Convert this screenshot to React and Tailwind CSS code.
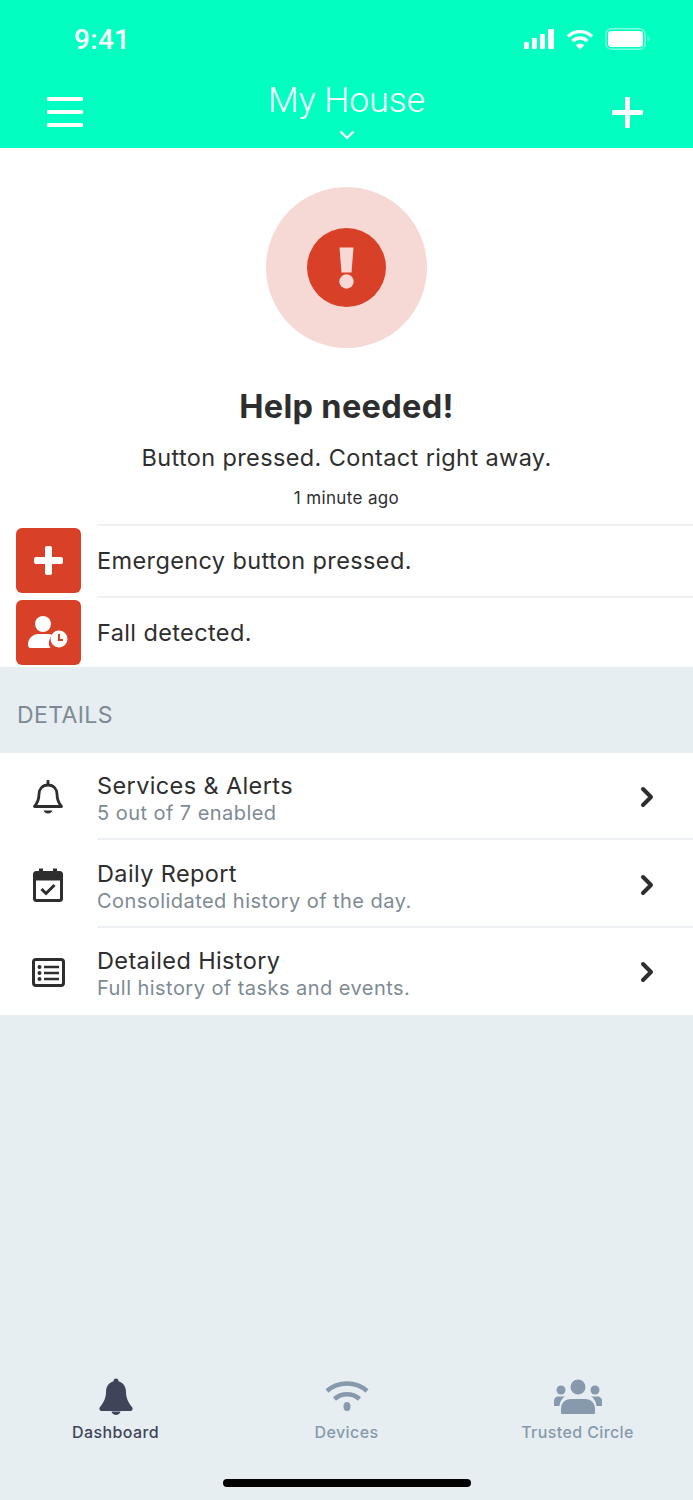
import React from "react";
import { ChevronRight } from "lucide-react";

const RED = "#d84127";

const StatusIcons = () => (
  <div className="flex items-center gap-[11px]">
    <svg width="32" height="20" viewBox="0 0 32 20" fill="white">
      <rect x="1" y="13" width="5" height="7" rx="1.2" />
      <rect x="9" y="9" width="5" height="11" rx="1.2" />
      <rect x="17" y="5" width="5" height="15" rx="1.2" />
      <rect x="25" y="0" width="6" height="20" rx="1.2" />
    </svg>
    <svg width="28" height="21" viewBox="0 0 28 21" fill="none" stroke="white" strokeWidth="3.4">
      <path d="M2 7.5C9 1 19 1 26 7.5" />
      <path d="M6.5 12C11 8 17 8 21.5 12" />
      <path d="M14 20.5L9.8 16.2C12 14.4 16 14.4 18.2 16.2Z" fill="white" stroke="none" />
    </svg>
    <svg width="45" height="22" viewBox="0 0 45 22" fill="none">
      <rect x="0.8" y="0.8" width="39.4" height="20.4" rx="5.5" stroke="white" strokeOpacity="0.5" strokeWidth="1.4" />
      <rect x="3" y="3" width="35" height="16" rx="3.4" fill="white" />
      <path d="M42.500 8v6c1.200-.5 2-1.700 2-3s-.8-2.500-2-3z" fill="white" fillOpacity="0.45" />
    </svg>
  </div>
);

const AlertRow = ({ icon, label }) => (
  <div className="flex h-[71.5px] items-center">
    <div className="ml-4 mt-[2px] flex h-[65px] w-[65px] shrink-0 items-center justify-center rounded-[6px] bg-[#d84127]">
      {icon}
    </div>
    <div className="ml-4 flex h-full flex-1 items-center border-t-2 border-[#edf1f4] text-[23.5px] tracking-[0.38px] text-[#2e2e2e]">
      {label}
    </div>
  </div>
);

const DetailRow = ({ icon, title, sub, last }) => (
  <div className="flex h-[87.5px] items-center">
    <div className="flex w-[97px] shrink-0 justify-center pr-px pt-[2px]">{icon}</div>
    <div className={`flex h-full flex-1 items-center border-b-2 pr-[30px] ${last ? "border-transparent" : "border-[#edf1f4]"}`}>
      <div className="flex-1 pt-[8px]">
        <p className="text-[23.5px] leading-[28px] tracking-[0.38px] text-[#2e2e2e]">{title}</p>
        <p className="text-[20px] leading-[26px] tracking-[0.45px] text-[#7e8a93]">{sub}</p>
      </div>
      <ChevronRight size={32} strokeWidth={3} color="#2e2e2e" className="mt-[4px]" />
    </div>
  </div>
);

const Tab = ({ icon, label, active }) => (
  <div className="flex w-[231px] flex-col items-center">
    <div className="flex h-[40px] items-center justify-center">{icon}</div>
    <span className={`mt-[4px] text-[16px] font-medium tracking-[0.4px] ${active ? "text-[#3f4458]" : "text-[#8799ad]"}`}>
      {label}
    </span>
  </div>
);

export default function App() {
  return (
    <div className="flex min-h-[1500px] flex-col bg-[#e6eef1] font-['Inter',sans-serif]">
      {/* header */}
      <div className="h-[148px] bg-[#00ffc0] text-white">
        <div className="flex h-[78px] items-center justify-between pl-[74px] pr-[43px]">
          <span className="pt-[1px] text-[28px] font-medium tracking-[0.3px] font-['Roboto',sans-serif]">9:41</span>
          <StatusIcons />
        </div>
        <div className="relative flex h-[70px] items-start justify-between pl-[47px] pr-[50px]">
          <div className="mt-[19px] flex w-[36px] flex-col gap-[9px]">
            <div className="h-[4px] rounded-[1px] bg-white" />
            <div className="h-[4px] rounded-[1px] bg-white" />
            <div className="h-[4px] rounded-[1px] bg-white" />
          </div>
          <div className="absolute left-0 right-0 top-0 flex flex-col items-center">
            <span className="text-[35.5px] leading-[45px] font-light font-['Roboto',sans-serif]">My House</span>
            <svg className="mt-[7px]" width="16" height="10" viewBox="0 0 16 10" fill="none" stroke="white" strokeWidth="2.2">
              <path d="M1.500 1.500L8 8l6.500-6.500" />
            </svg>
          </div>
          <svg className="mt-[19px]" width="31" height="31" viewBox="0 0 31 31" fill="white">
            <rect x="13" y="0" width="5" height="31" rx="1" />
            <rect x="0" y="13" width="31" height="5" rx="1" />
          </svg>
        </div>
      </div>

      {/* alert */}
      <div className="bg-white">
        <div className="flex flex-col items-center pt-[39px]">
          <div className="flex h-[161px] w-[161px] items-center justify-center rounded-full bg-[#f6d9d4]">
            <div className="flex h-[79px] w-[79px] items-center justify-center rounded-full bg-[#d84127]">
              <svg width="15" height="42" viewBox="0 0 15 42" fill="#f6d9d4">
                <path d="M.5 .5h14l-2 25H2.500z" />
                <circle cx="7.500" cy="34.500" r="7.200" />
              </svg>
            </div>
          </div>
          <h1 className="mt-[38px] text-[32.5px] leading-[42px] font-bold tracking-[0.3px] text-[#2e2e2e]">Help needed!</h1>
          <p className="mt-[13px] text-[23.5px] leading-[34px] tracking-[0.38px] text-[#2e2e2e]">Button pressed. Contact right away.</p>
          <p className="mt-[11px] text-[17px] leading-[24px] tracking-[0.35px] text-[#2e2e2e]">1 minute ago</p>
        </div>
        <div className="mt-[14px]">
          <AlertRow
            label="Emergency button pressed."
            icon={
              <svg width="29" height="29" viewBox="0 0 29 29" fill="white">
                <rect x="11" y="0" width="7" height="29" rx="2" />
                <rect x="0" y="11" width="29" height="7" rx="2" />
              </svg>
            }
          />
          <AlertRow
            label="Fall detected."
            icon={
              <svg width="42" height="33" viewBox="0 0 42 33" fill="white">
                <circle cx="15" cy="8" r="8" />
                <path d="M3 32c-2 0-3-1-3-3 0-7 5-11 10-11h10c1.500 0 3 .3 4.500.9-3.500 3-5 9-2 13.100z" />
                <circle cx="31" cy="23" r="8.500" />
                <path d="M31 18V24h4" fill="none" stroke={RED} strokeWidth="2" />
              </svg>
            }
          />
        </div>
      </div>

      {/* details */}
      <div className="flex h-[85.5px] items-center px-[17px] pt-[10px] text-[23px] tracking-[0.4px] text-[#7e8a93]">DETAILS</div>
      <div className="bg-white">
        <DetailRow
          title="Services & Alerts"
          sub="5 out of 7 enabled"
          icon={
            <svg width="30" height="34" viewBox="0 0 30 34" fill="none" stroke="#2e2e2e" strokeWidth="2.800">
              <path d="M15 5c-5.500 0-9 4-9 9 0 6-1.500 9-4.500 12.500h27C25.500 23 24 20 24 14c0-5-3.500-9-9-9z" strokeLinejoin="round" />
              <path d="M15 1v3" strokeLinecap="round" />
              <path d="M10.500 30.500h9c-.8 2-2.500 3-4.500 3s-3.700-1-4.500-3z" fill="#2e2e2e" stroke="none" />
            </svg>
          }
        />
        <DetailRow
          title="Daily Report"
          sub="Consolidated history of the day."
          icon={
            <svg width="30" height="34" viewBox="0 0 30 34" fill="none" stroke="#2e2e2e" strokeWidth="3">
              <rect x="1.500" y="4.500" width="27" height="28" rx="2" />
              <path d="M1.500 7h27v4h-27z" fill="#2e2e2e" />
              <path d="M8 0.500v6M22 0.500v6" strokeWidth="4" />
              <path d="M8.500 21l4.500 4.500 8.500-8.500" strokeWidth="3" />
            </svg>
          }
        />
        <DetailRow
          last
          title="Detailed History"
          sub="Full history of tasks and events."
          icon={
            <svg width="33" height="29" viewBox="0 0 33 29" fill="none" stroke="#2e2e2e" strokeWidth="3">
              <rect x="1.500" y="1.500" width="30" height="26" rx="2.500" />
              <path d="M12 9h15M12 15h15M12 21h15" strokeWidth="2.500" />
              <circle cx="7.500" cy="9" r="2" fill="#2e2e2e" stroke="none" />
              <circle cx="7.500" cy="15" r="2" fill="#2e2e2e" stroke="none" />
              <circle cx="7.500" cy="21" r="2" fill="#2e2e2e" stroke="none" />
            </svg>
          }
        />
      </div>

      <div className="flex-1" />

      {/* tabs */}
      <div className="flex h-[124px] flex-col">
        <div className="flex">
          <Tab
            active
            label="Dashboard"
            icon={
              <svg width="34" height="37" viewBox="0 0 34 37" fill="#3f4458">
                <circle cx="17" cy="3" r="2.500" />
                <path d="M17 3c-6.500 0-10 5-10 11 0 6-2.500 11-6 15-1.500 2 0 4 2 4h28c2 0 3.500-2 2-4-3.500-4-6-9-6-15 0-6-3.500-11-10-11z" />
                <path d="M12.500 33.500c.5 2.200 2.300 3.500 4.500 3.500s4-1.300 4.500-3.500z" />
              </svg>
            }
          />
          <Tab
            label="Devices"
            icon={
              <svg width="44" height="33" viewBox="0 0 44 33" fill="none" stroke="#8799ad" strokeWidth="4.500">
                <path d="M2 11c11-10 29-10 40 0" />
                <path d="M9.500 19c7-6.500 18-6.500 25 0" />
                <ellipse cx="22" cy="26.500" rx="3.500" ry="4.500" fill="#8799ad" stroke="none" />
              </svg>
            }
          />
          <Tab
            label="Trusted Circle"
            icon={
              <svg width="48" height="35" viewBox="0 0 48 35" fill="#8799ad">
                <circle cx="24" cy="8" r="7.500" />
                <circle cx="7" cy="11" r="4.500" />
                <circle cx="41" cy="11" r="4.500" />
                <path d="M8 35c-.6 0-1-.5-1-1v-4c0-6 4-10 10-10h14c6 0 10 4 10 10v4c0 .5-.4 1-1 1z" />
                <path d="M0 27v-5c0-3 2-4.500 4-4.500h7c-3 1.500-5 5-5.500 9.500z" />
                <path d="M48 27v-5c0-3-2-4.500-4-4.500h-7c3 1.500 5 5 5.500 9.500z" />
              </svg>
            }
          />
        </div>
        <div className="mt-[35px] flex justify-center">
          <div className="h-[8px] w-[248px] rounded-full bg-black" />
        </div>
      </div>
    </div>
  );
}
